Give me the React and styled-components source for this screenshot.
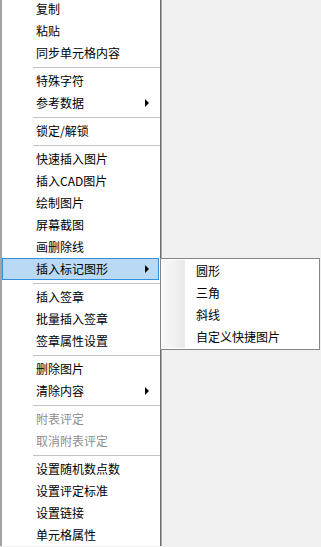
// IMPORTS
    import React, { Component } from "react";
    import styled, { createGlobalStyle } from 'styled-components'


// -- *** -- START CODE -- *** -- //

// Menu data
const MENU_ITEMS = [
    { label: '复制' },
    { label: '粘贴' },
    { label: '同步单元格内容' },
    { sep: true },
    { label: '特殊字符' },
    { label: '参考数据', sub: true },
    { sep: true },
    { label: '锁定/解锁' },
    { sep: true },
    { label: '快速插入图片' },
    { label: '插入CAD图片' },
    { label: '绘制图片' },
    { label: '屏幕截图' },
    { label: '画删除线' },
    { label: '插入标记图形', sub: true, open: true },
    { sep: true },
    { label: '插入签章' },
    { label: '批量插入签章' },
    { label: '签章属性设置' },
    { sep: true },
    { label: '删除图片' },
    { label: '清除内容', sub: true },
    { sep: true },
    { label: '附表评定', disabled: true },
    { label: '取消附表评定', disabled: true },
    { sep: true },
    { label: '设置随机数点数' },
    { label: '设置评定标准' },
    { label: '设置链接' },
    { label: '单元格属性' },
];

const SUB_ITEMS = ['圆形', '三角', '斜线', '自定义快捷图片'];


// Styled Components
const GlobalStyle = createGlobalStyle`
    html, body {
        margin: 0;
        padding: 0;
        height: 100%;
        background: #f0f0f0;
        overflow: hidden;
    }
    body {
        font-family: "Microsoft YaHei", "Noto Sans CJK SC", sans-serif;
        font-size: 12px;
        color: #000;
    }
`;

const Styled_Menu = styled.div`
    display: flex;
    flex-direction: column;

    width: 158px;
    margin-top: -2px;
    background: #fff;
    border-left: 2px solid #a3a3a3;
    border-right: 1px solid #6e6e6e;
    box-shadow: 1px 0 0 #a8a8a8;
`;

const Styled_Item = styled.div`
    position: relative;
    display: flex;
    align-items: center;
    justify-content: space-between;

    height: 20px;
    line-height: 20px;
    margin-right: 1px;
    padding: 0 9px 0 33px;
    border: 1px solid ${props => props.$active ? '#2f8ee0' : 'transparent'};
    background: ${props => props.$active ? '#b9d9f5' : 'transparent'};
    color: ${props => props.$disabled ? '#8e8e8e' : '#000'};
    white-space: nowrap;
`;

const Styled_Arrow = styled.span`
    width: 0;
    height: 0;
    border-left: 4px solid #000;
    border-top: 4px solid transparent;
    border-bottom: 4px solid transparent;
`;

const Styled_Separator = styled.div`
    display: flex;
    align-items: center;

    height: 6px;
    padding-left: 31px;

    &::after {
        content: '';
        flex: 1;
        height: 1px;
        background: #c3c3c3;
    }
`;

// flyout sits over the page, so absolute here
const Styled_SubMenu = styled.div`
    position: absolute;
    top: -1px;
    left: calc(100% + 2px);
    z-index: 2;

    width: 158px;
    padding: 1px 0;
    background: #fff;
    border: 1px solid #858585;
`;

const Styled_SubList = styled.div`
    display: flex;
    flex-direction: column;

    background: linear-gradient(to right, #fafafa, #e9e9e9) no-repeat;
    background-size: 24px 100%;
`;

const Styled_SubItem = styled.div`
    height: 22px;
    line-height: 22px;
    padding-left: 35px;
    color: #000;
    white-space: nowrap;
`;


class App extends Component {
    render() {
        return (
            <>
                <GlobalStyle />
                <Styled_Menu>
                    {MENU_ITEMS.map((item, i) => item.sep
                        ? <Styled_Separator key={i} />
                        : (
                            <Styled_Item key={i} $active={item.open} $disabled={item.disabled}>
                                <span>{item.label}</span>
                                {item.sub && <Styled_Arrow />}
                                {item.open && (
                                    <Styled_SubMenu>
                                        <Styled_SubList>
                                            {SUB_ITEMS.map(s => <Styled_SubItem key={s}>{s}</Styled_SubItem>)}
                                        </Styled_SubList>
                                    </Styled_SubMenu>
                                )}
                            </Styled_Item>
                        )
                    )}
                </Styled_Menu>
            </>
        );
    }
}

export default App
